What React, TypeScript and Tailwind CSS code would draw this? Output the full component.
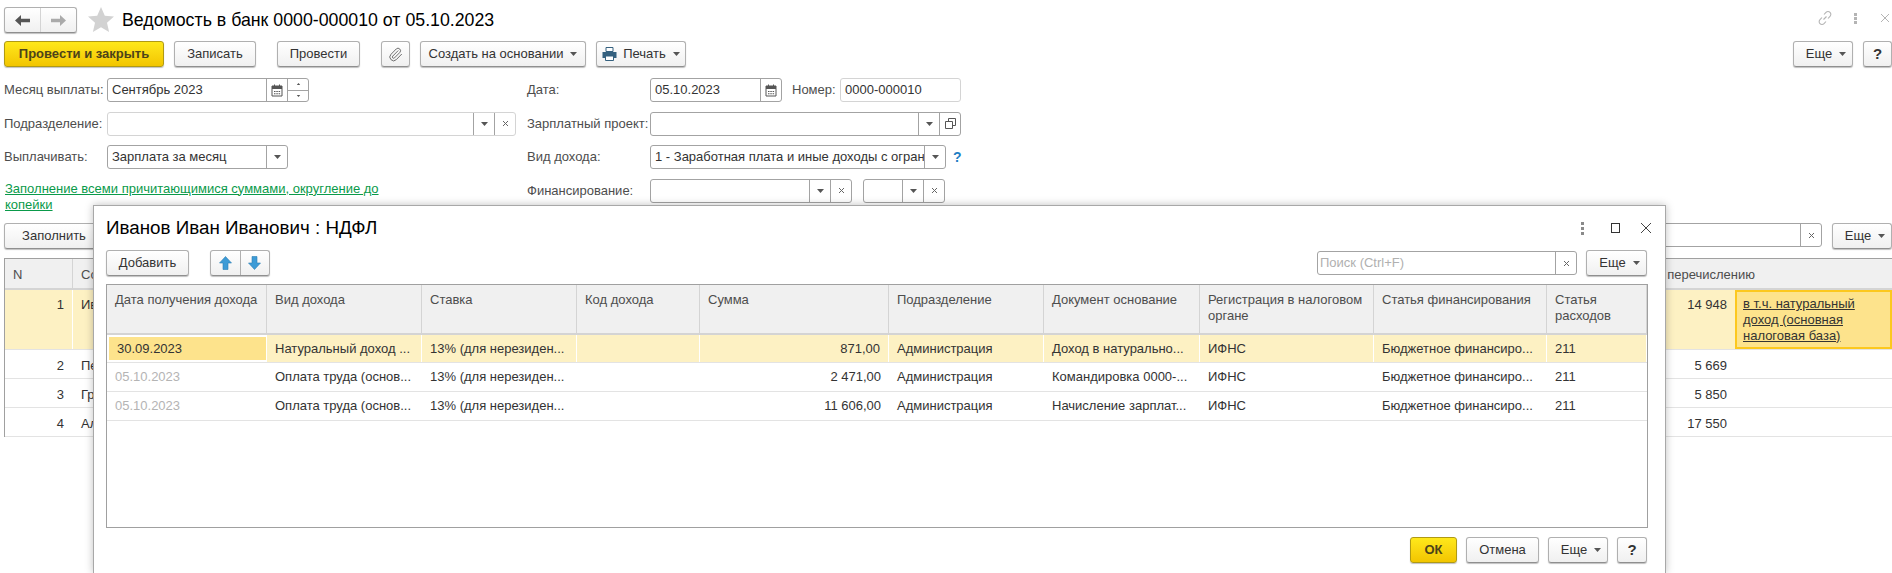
import type { ReactNode } from 'react'
import { Paperclip } from 'lucide-react'

const btn =
  'flex items-center justify-center h-[26px] rounded-[3px] border border-[#b0b0b0] border-b-[#8f8f8f] bg-gradient-to-b from-white to-[#f0f0f0] shadow-[0_1px_1px_rgba(0,0,0,0.25)] text-[#333] text-[13px] whitespace-nowrap'

const yellowBtn =
  'flex items-center justify-center h-[26px] rounded-[3px] border border-[#b09a14] bg-gradient-to-b from-[#ffe81a] to-[#f2c500] shadow-[0_1px_1px_rgba(0,0,0,0.25)] font-bold text-[#4d4319] text-[13px] whitespace-nowrap'

const Caret = ({ className = 'ml-[7px]' }: { className?: string }) => (
  <svg width="7" height="4" viewBox="0 0 7 4" className={className}>
    <path d="M0 0h7L3.5 4z" fill="#555" />
  </svg>
)

const Cross = () => (
  <svg width="7" height="7" viewBox="0 0 7 7">
    <path d="M1 1l5 5M6 1L1 6" stroke="#666" strokeWidth="1" fill="none" />
  </svg>
)

const Calendar = () => (
  <svg width="12" height="13" viewBox="0 0 12 13">
    <path d="M1 2h10v10H1z" fill="none" stroke="#555" />
    <path d="M1 2h10v3H1zM3 0.5h1v2H3zM8 0.5h1v2H8z" fill="#555" />
    <path d="M3 7h1.500v1H3zM5.300 7h1.500v1H5.300zM7.600 7h1.500v1H7.600zM3 9.300h1.500v1H3zM5.300 9.300h1.500v1H5.300zM7.600 9.300h1.500v1H7.600z" fill="#555" />
  </svg>
)

const More = ({ width = 'w-[60px]' }: { width?: string }) => (
  <button className={`${btn} ${width} pl-[6px]`}>
    Еще
    <Caret />
  </button>
)

// поле ввода с кнопками справа
function Field({
  value,
  width,
  buttons = [],
  light,
  placeholder,
}: {
  value?: string
  width: string
  buttons?: ReactNode[]
  light?: boolean
  placeholder?: string
}) {
  return (
    <div
      className={`flex h-[24px] ${width} rounded-[3px] border bg-white ${light ? 'border-[#d4d4d4]' : 'border-[#a3a3a3]'}`}
    >
      <div
        className={`flex-1 min-w-0 overflow-hidden whitespace-nowrap text-[13px] leading-[22px] ${placeholder ? 'px-[2px] text-[#b0b0b0]' : 'px-[4px] text-[#333]'}`}
      >
        {value ?? placeholder}
      </div>
      {buttons.map((b, i) => (
        <div key={i} className="flex w-[21px] shrink-0 items-center justify-center border-l border-[#a3a3a3]">
          {b}
        </div>
      ))}
    </div>
  )
}

const Label = ({ children, width }: { children: string; width: string }) => (
  <div className={`${width} shrink-0 whitespace-nowrap text-[13px] text-[#4d4d4d]`}>{children}</div>
)

const Row = ({ children }: { children: ReactNode }) => <div className="flex h-[24px] items-center">{children}</div>

const modalCols =
  'grid grid-cols-[160px_155px_155px_123px_189px_155px_156px_174px_173px_100px]'

const headers = [
  'Дата получения дохода',
  'Вид дохода',
  'Ставка',
  'Код дохода',
  'Сумма',
  'Подразделение',
  'Документ основание',
  'Регистрация в налоговом органе',
  'Статья финансирования',
  'Статья расходов',
]

const rows = [
  ['30.09.2023', 'Натуральный доход ...', '13% (для нерезиден...', '', '871,00', 'Администрация', 'Доход в натурально...', 'ИФНС', 'Бюджетное финансиро...', '211'],
  ['05.10.2023', 'Оплата труда (основ...', '13% (для нерезиден...', '', '2 471,00', 'Администрация', 'Командировка 0000-...', 'ИФНС', 'Бюджетное финансиро...', '211'],
  ['05.10.2023', 'Оплата труда (основ...', '13% (для нерезиден...', '', '11 606,00', 'Администрация', 'Начисление зарплат...', 'ИФНС', 'Бюджетное финансиро...', '211'],
]

const mainRows = [
  { n: '1', name: 'Иванов Иван Иванович', sum: '14 948', h: 'h-[60px]', pt: 'pt-[5px]' },
  { n: '2', name: 'Петров Петр Петрович', sum: '5 669', h: 'h-[29px]', pt: 'pt-[6px]' },
  { n: '3', name: 'Григорьев Олег Сергеевич', sum: '5 850', h: 'h-[29px]', pt: 'pt-[6px]' },
  { n: '4', name: 'Алексеев Иван Павлович', sum: '17 550', h: 'h-[29px]', pt: 'pt-[6px]' },
]

const mainCols = 'grid grid-cols-[68px_1fr_155px_157px]'

function Modal() {
  return (
    <div className="absolute left-[93px] top-[205px] flex h-[368px] w-[1573px] flex-col border border-[#a8a8a8] border-b-0 bg-white pl-[12px] pr-[17px] shadow-[0_0_8px_rgba(0,0,0,0.25)]">
      <div className="flex h-[44px] items-center justify-between">
        <div className="text-[18.800px] text-black">Иванов Иван Иванович : НДФЛ</div>
        <div className="-mr-[17px] flex items-center">
          <svg width="3" height="13" viewBox="0 0 3 13" className="mr-[27px]">
            <path d="M0 0h3v3H0zM0 5h3v3H0zM0 10h3v3H0z" fill="#8a8a8a" />
          </svg>
          <div className="mr-[20px] h-[10px] w-[9px] border border-[#333]" />
          <svg width="12" height="12" viewBox="0 0 12 12" className="mr-[13px]">
            <path d="M1 1l10 10M11 1L1 11" stroke="#444" fill="none" />
          </svg>
        </div>
      </div>
      <div className="flex h-[26px] items-center">
        <button className={`${btn} w-[83px]`}>Добавить</button>
        <div className={`${btn} ml-[21px] w-[60px]`}>
          <div className="flex h-full flex-1 items-center justify-center border-r border-[#b0b0b0]">
            <svg width="13" height="14" viewBox="0 0 13 14">
              <path d="M6.500 0.500L12.500 7H9v6.500H4V7H0.500z" fill="#3d9bd6" stroke="#2b7fb5" strokeWidth="0.600" />
            </svg>
          </div>
          <div className="flex h-full flex-1 items-center justify-center">
            <svg width="13" height="14" viewBox="0 0 13 14">
              <path d="M6.500 13.500L12.500 7H9V0.500H4V7H0.500z" fill="#3d9bd6" stroke="#2b7fb5" strokeWidth="0.600" />
            </svg>
          </div>
        </div>
        <div className="ml-auto flex items-center pr-[1px]">
          <Field placeholder="Поиск (Ctrl+F)" width="w-[260px]" buttons={[<Cross key="x" />]} />
          <div className="ml-[9px]">
            <More width="w-[61px]" />
          </div>
        </div>
      </div>
      <div className="mt-[8px] h-[244px] border border-[#a0a0a0]">
        <div className={`${modalCols} h-[50px] border-b-2 border-[#d4d4d4] bg-[#f0f0f0]`}>
          {headers.map(h => (
            <div key={h} className="border-r border-[#d4d4d4] px-[8px] pt-[7px] text-[13px] leading-[16px] text-[#4d4d4d]">
              {h}
            </div>
          ))}
        </div>
        {rows.map((r, i) => (
          <div
            key={i}
            className={`${modalCols} ${i === 0 ? 'h-[28px] bg-[#fdf1c3]' : 'h-[29px]'} border-b border-[#e3e3e3] text-[13px] text-[#333]`}
          >
            {r.map((c, j) => (
              <div
                key={j}
                className={`flex items-center overflow-hidden whitespace-nowrap px-[8px] ${i === 0 ? 'border-r border-white' : ''} ${j === 4 ? 'justify-end' : ''} ${j === 0 && i > 0 ? 'text-[#b4b4b4]' : ''} ${j === 0 && i === 0 ? 'border-2 border-[#fcc81e] bg-[#fde38c] px-[6px]' : ''}`}
              >
                {c}
              </div>
            ))}
          </div>
        ))}
      </div>
      <div className="mt-[9px] flex h-[26px] justify-end gap-[9px] pr-[1px]">
        <button className={`${yellowBtn} w-[47px]`}>ОК</button>
        <button className={`${btn} w-[73px]`}>Отмена</button>
        <More />
        <button className={`${btn} w-[30px] text-[15px] font-bold`}>?</button>
      </div>
    </div>
  )
}

export default function App() {
  return (
    <div className="relative h-[573px] w-[1892px] overflow-hidden bg-white font-['Liberation_Sans',Arial,sans-serif]">
      {/* заголовок */}
      <div className="flex h-[41px] items-start pl-[4px] pt-[7px]">
        <div className={`${btn} h-[25px] w-[73px]`}>
          <div className="flex h-full flex-1 items-center justify-center border-r border-[#d4d4d4]">
            <svg width="15" height="11" viewBox="0 0 15 11">
              <path d="M0 5.500L6 0v3.800h9v3.400H6V11z" fill="#555" />
            </svg>
          </div>
          <div className="flex h-full flex-1 items-center justify-center">
            <svg width="15" height="11" viewBox="0 0 15 11">
              <path d="M15 5.500L9 0v3.800H0v3.400h9V11z" fill="#aaa" />
            </svg>
          </div>
        </div>
        <svg width="26" height="25" viewBox="0 0 26 25" className="ml-[11px]">
          <path d="M13 0l3.800 8.700 9.200.9-7 6.200 2.100 9.200L13 20.200 4.900 25 7 15.800 0 9.600l9.200-.9z" fill="#d2d2d2" />
        </svg>
        <div className="ml-[8px] text-[17.750px] leading-[26px] text-black">Ведомость в банк 0000-000010 от 05.10.2023</div>
        <div className="ml-auto flex items-center pr-[2px] pt-[3px]">
          <svg width="16" height="16" viewBox="0 0 16 16" fill="none" stroke="#b4b4b4" strokeWidth="1.100">
            <path d="M6.500 9.500l3-3M7 4.500l2-2.200a2.800 2.800 0 014 0 2.800 2.800 0 010 4L11 8.500M9 11.500l-2 2.200a2.800 2.800 0 01-4 0 2.800 2.800 0 010-4L5 7.500" />
          </svg>
          <svg width="3" height="11" viewBox="0 0 3 11" className="ml-[21px]">
            <path d="M0 0h3v3H0zM0 4h3v3H0zM0 8h3v3H0z" fill="#b4b4b4" />
          </svg>
          <svg width="10" height="10" viewBox="0 0 10 10" className="ml-[23px]">
            <path d="M1 1l8 8M9 1L1 9" stroke="#b4b4b4" fill="none" />
          </svg>
        </div>
      </div>

      {/* командная панель */}
      <div className="flex h-[26px] pl-[4px]">
        <button className={`${yellowBtn} w-[160px]`}>Провести и закрыть</button>
        <button className={`${btn} ml-[10px] w-[82px]`}>Записать</button>
        <button className={`${btn} ml-[21px] w-[83px]`}>Провести</button>
        <button className={`${btn} ml-[21px] w-[29px]`}>
          <Paperclip size={15} strokeWidth={1.500} color="#666" />
        </button>
        <button className={`${btn} ml-[10px] w-[166px]`}>
          Создать на основании
          <Caret />
        </button>
        <button className={`${btn} ml-[10px] w-[90px]`}>
          <svg width="15" height="14" viewBox="0 0 15 14" className="mr-[6px]">
            <path d="M4 0.500h7v4H4z" fill="#fff" stroke="#35617f" />
            <path d="M0.500 5h14v6h-14z" fill="#35617f" />
            <path d="M3.500 9h8v4.500h-8z" fill="#fff" stroke="#35617f" />
          </svg>
          Печать
          <Caret />
        </button>
        <div className="ml-auto flex gap-[10px]">
          <More />
          <button className={`${btn} w-[29px] text-[15px] font-bold`}>?</button>
        </div>
      </div>

      {/* реквизиты */}
      <div className="mt-[11px] flex h-[134px] pl-[4px]">
        <div className="flex w-[523px] shrink-0 flex-col gap-[9.500px]">
          <Row>
            <Label width="w-[103px]">Месяц выплаты:</Label>
            <div className="flex h-[24px] w-[202px] rounded-[3px] border border-[#a3a3a3]">
              <div className="flex-1 px-[4px] text-[13px] leading-[22px] text-[#333]">Сентябрь 2023</div>
              <div className="flex w-[21px] items-center justify-center border-l border-[#a3a3a3]">
                <Calendar />
              </div>
              <div className="flex w-[21px] flex-col border-l border-[#a3a3a3]">
                <div className="flex flex-1 items-center justify-center border-b border-[#a3a3a3]">
                  <Caret className="rotate-180 scale-50" />
                </div>
                <div className="flex flex-1 items-center justify-center">
                  <Caret className="scale-50" />
                </div>
              </div>
            </div>
          </Row>
          <Row>
            <Label width="w-[103px]">Подразделение:</Label>
            <Field width="w-[409px]" light buttons={[<Caret key="c" className="" />, <Cross key="x" />]} />
          </Row>
          <Row>
            <Label width="w-[103px]">Выплачивать:</Label>
            <Field value="Зарплата за месяц" width="w-[181px]" buttons={[<Caret key="c" className="" />]} />
          </Row>
          <a href="#" className="ml-[1px] mt-[2px] block w-[400px] text-[13px] leading-[16px] text-[#0a9a4a] underline">
            Заполнение всеми причитающимися суммами, округление до копейки
          </a>
        </div>
        <div className="flex flex-col gap-[9.500px]">
          <Row>
            <Label width="w-[123px]">Дата:</Label>
            <Field value="05.10.2023" width="w-[132px]" buttons={[<Calendar key="k" />]} />
            <Label width="w-[48px] ml-[10px]">Номер:</Label>
            <Field value="0000-000010" width="w-[121px]" light />
          </Row>
          <Row>
            <Label width="w-[123px]">Зарплатный проект:</Label>
            <Field
              width="w-[311px]"
              buttons={[
                <Caret key="c" className="" />,
                <svg key="o" width="11" height="11" viewBox="0 0 11 11" fill="none" stroke="#555">
                  <path d="M3.500 3V0.500h7v7H8M0.500 3.500h7v7h-7z" />
                </svg>,
              ]}
            />
          </Row>
          <Row>
            <Label width="w-[123px]">Вид дохода:</Label>
            <Field
              value="1 - Заработная плата и иные доходы с огран"
              width="w-[296px]"
              buttons={[<Caret key="c" className="" />]}
            />
            <span className="ml-[7px] text-[14px] font-bold text-[#1f7fc4]">?</span>
          </Row>
          <Row>
            <Label width="w-[123px]">Финансирование:</Label>
            <Field width="w-[202px]" buttons={[<Caret key="c" className="" />, <Cross key="x" />]} />
            <div className="ml-[11px]">
              <Field width="w-[82px]" buttons={[<Caret key="c" className="" />, <Cross key="x" />]} />
            </div>
          </Row>
        </div>
      </div>

      {/* панель табличной части */}
      <div className="mt-[11px] flex h-[25px] pl-[4px]">
        <button className={`${btn} w-[100px]`}>Заполнить</button>
        <div className="ml-auto flex gap-[10px]">
          <Field placeholder="Поиск (Ctrl+F)" width="w-[260px]" buttons={[<Cross key="x" />]} />
          <More />
        </div>
      </div>

      {/* табличная часть */}
      <div className="ml-[4px] mt-[10px] border-l border-t border-[#a0a0a0]">
        <div className={`${mainCols} h-[31px] border-b-2 border-[#d4d4d4] bg-[#f0f0f0] text-[13px] text-[#4d4d4d]`}>
          <div className="border-r border-[#d4d4d4] px-[8px] pt-[6px]">N</div>
          <div className="border-r border-[#d4d4d4] px-[8px] pt-[6px]">Сотрудник</div>
          <div className="col-span-2 pl-[76px] pt-[6px]">К перечислению</div>
        </div>
        {mainRows.map((r, i) => (
          <div key={r.n} className={`${mainCols} ${r.h} border-b border-[#e3e3e3] text-[13px] text-[#333] ${i === 0 ? 'bg-[#fdf1c3]' : ''}`}>
            <div className={`border-r px-[8px] text-right ${r.pt} ${i === 0 ? 'border-white' : 'border-transparent'}`}>{r.n}</div>
            <div className={`px-[8px] ${r.pt}`}>{r.name}</div>
            <div className={`px-[8px] text-right ${r.pt}`}>{r.sum}</div>
            {i === 0 ? (
              <div className="border-2 border-[#fcc81e] bg-[#fde38c] px-[6px] pt-[4px] leading-[16px] underline">
                в т.ч. натуральный доход (основная налоговая база)
              </div>
            ) : (
              <div />
            )}
          </div>
        ))}
      </div>

      <Modal />
    </div>
  )
}
